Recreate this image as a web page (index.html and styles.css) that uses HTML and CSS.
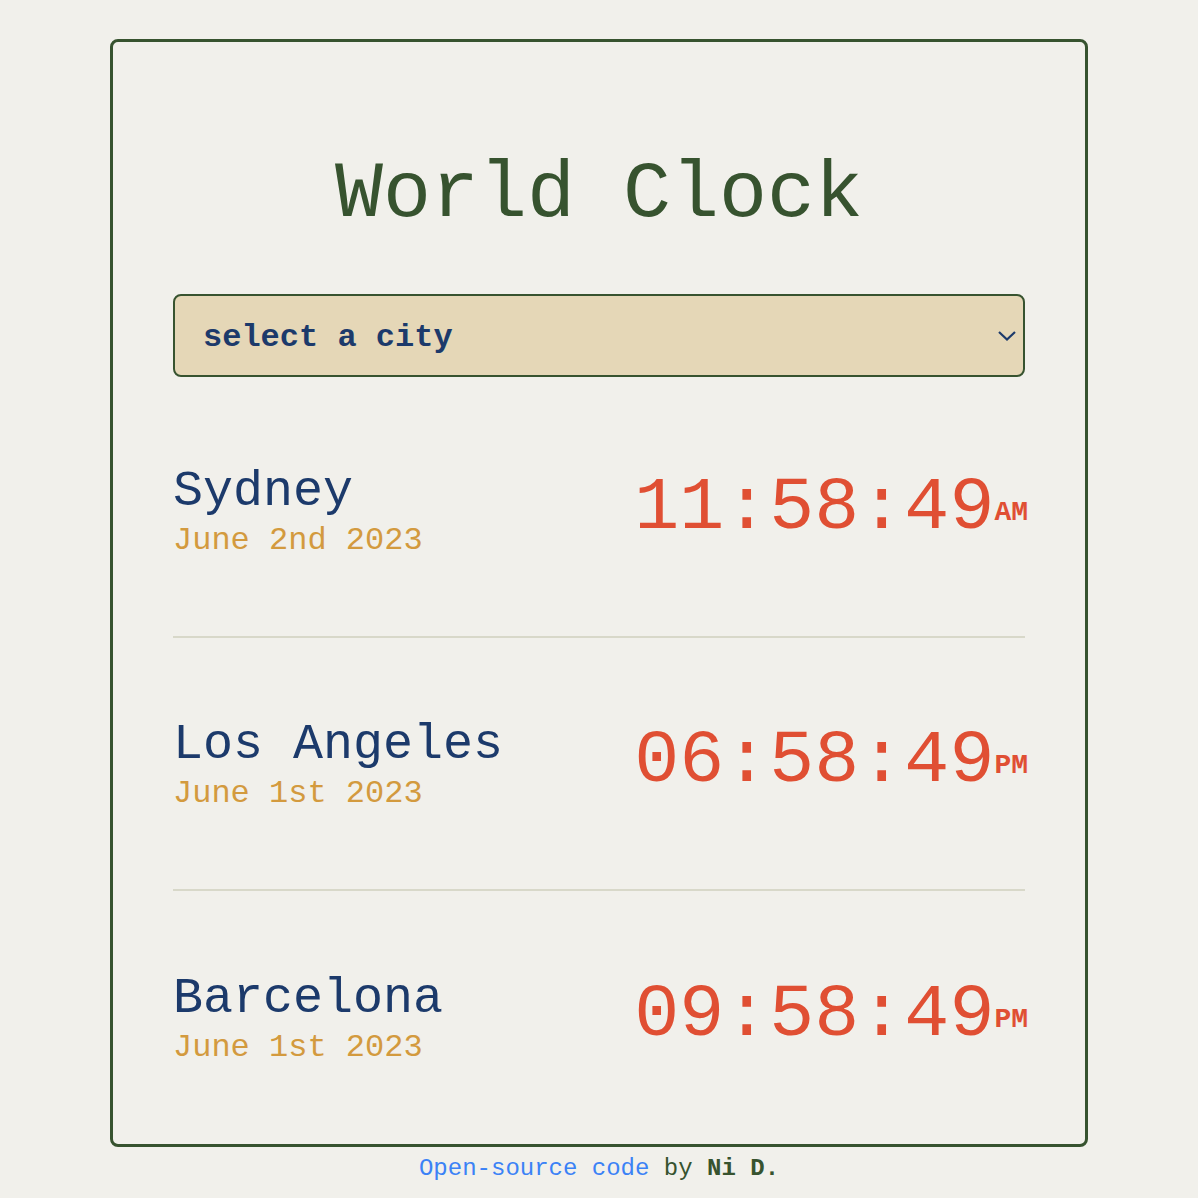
FILE: index.html
```html
<!DOCTYPE html>
<html lang="en">
<head>
<meta charset="utf-8">
<title>World Clock</title>
<link rel="stylesheet" href="styles.css">
</head>
<body>
<div class="container">
  <h1 class="title">World Clock</h1>
  <div class="select-wrap">
    <select class="city-select">
      <option>select a city</option>
    </select>
    <svg class="chevron" width="18" height="10" viewBox="0 0 18 10"><path d="M1 1 L9 8.5 L17 1" fill="none" stroke="#1c3a6b" stroke-width="2.2"/></svg>
  </div>
  <div class="cities">
    <div class="city">
      <div class="city-info">
        <div class="city-name">Sydney</div>
        <div class="city-date">June 2nd 2023</div>
      </div>
      <div class="city-time">11:58:49<span class="ampm">AM</span></div>
    </div>
    <div class="city">
      <div class="city-info">
        <div class="city-name">Los Angeles</div>
        <div class="city-date">June 1st 2023</div>
      </div>
      <div class="city-time">06:58:49<span class="ampm">PM</span></div>
    </div>
    <div class="city">
      <div class="city-info">
        <div class="city-name">Barcelona</div>
        <div class="city-date">June 1st 2023</div>
      </div>
      <div class="city-time">09:58:49<span class="ampm">PM</span></div>
    </div>
  </div>
</div>
<footer class="footer"><a class="footer-link" href="#">Open-source code</a> by <strong class="author">Ni D.</strong></footer>
</body>
</html>
```
FILE: styles.css
```css
* { box-sizing: border-box; }
body {
  margin: 8px;
  background: #f1f0eb;
  font-family: "Liberation Mono", "Courier New", monospace;
}
.container {
  width: 978px;
  margin: 31px auto 0;
  border: 3px solid #37532f;
  border-radius: 8px;
  padding: 60px 60px 0;
}
.title {
  margin: 48px 0 54px;
  font-size: 80px;
  font-weight: normal;
  line-height: 90px;
  color: #37532f;
  text-align: center;
}
.select-wrap {
  position: relative;
}
.city-select {
  -webkit-appearance: none;
  appearance: none;
  display: block;
  width: 100%;
  height: 83px;
  padding: 4px 28px 0;
  background: #e5d7b7;
  border: 2px solid #37532f;
  border-radius: 8px;
  font-family: "Liberation Mono", "Courier New", monospace;
  font-size: 32px;
  font-weight: bold;
  color: #1c3a6b;
}
.chevron {
  position: absolute;
  right: 9px;
  top: 37px;
  pointer-events: none;
}
.cities {
  margin-top: 8px;
}
.city {
  display: flex;
  justify-content: space-between;
  align-items: center;
  height: 253px;
  border-bottom: 2px solid #d8d8c9;
}
.city:last-child {
  border-bottom: none;
}
.city-name {
  font-size: 50px;
  line-height: 60px;
  color: #1c3a6b;
}
.city-date {
  font-size: 32px;
  line-height: 38px;
  color: #d39a3e;
}
.city-time {
  font-size: 75px;
  line-height: 90px;
  color: #e04f33;
  white-space: nowrap;
  margin-right: -3px;
}
.ampm {
  font-size: 28px;
  font-weight: bold;
  vertical-align: 8px;
}
.footer {
  margin-top: 8px;
  text-align: center;
  font-size: 24px;
  color: #37532f;
}
.footer-link {
  color: #3b82f6;
  text-decoration: none;
}
.author {
  font-weight: bold;
}
```
